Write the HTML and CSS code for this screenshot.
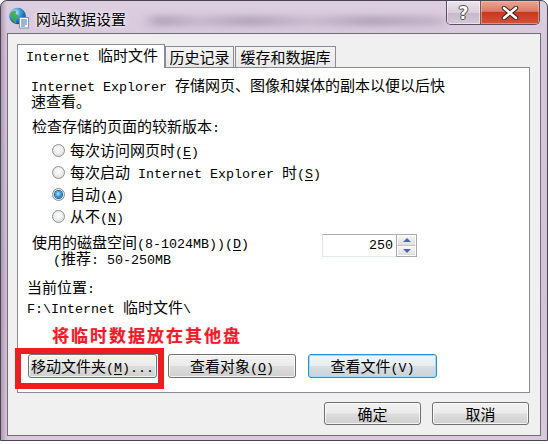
FILE: index.html
```html
<!DOCTYPE html>
<html lang="zh-CN">
<head>
  <meta charset="UTF-8" />
  <title>网站数据设置</title>
  <link rel="stylesheet" href="styles.css">
</head>
<body>
  <div class="window">
    <div class="titlebar">
      <svg class="app-icon" width="22" height="22" viewBox="0 0 22 22">
        <defs>
          <radialGradient id="globe" cx="35%" cy="30%" r="75%">
            <stop offset="0" stop-color="#d4f4ff"/>
            <stop offset="0.45" stop-color="#3a9ce0"/>
            <stop offset="1" stop-color="#0b3f86"/>
          </radialGradient>
        </defs>
        <circle cx="9.5" cy="9" r="8.3" fill="url(#globe)"/>
        <path d="M2.5 6.5c1.5-2 3.5-3 5.5-2.5 1 1-1 2.2 0 3.2s2.6 0.2 2.4 1.8-2.2 1.4-2.4 3.2 1 2.8 0 4.3c-2-0.6-3.4-2.4-3.2-4.4s-1.2-2.4-2.1-3.5z" fill="#47a83a" opacity="0.9"/>
        <path d="M12 3c1.6 0.4 3 1.6 3.6 3-1.2 0.3-2.2-0.4-2.8-1.2z" fill="#47a83a" opacity="0.8"/>
        <rect x="11.5" y="10.5" width="9" height="10.5" fill="#fbfdff" stroke="#7d93b2"/>
        <path d="M13 13h6M13 15h6M13 17h6M13 19h4" stroke="#3a6cc0" stroke-width="1"/>
      </svg>
      <span class="title">网站数据设置</span>
      <div class="behind"></div>
      <div class="caption">
        <div class="cap-btn help">?</div>
        <div class="cap-btn close">
          <svg width="20" height="14" viewBox="0 0 20 14">
            <path d="M4 2l12 10M16 2L4 12" stroke="#3a2020" stroke-width="4.6" stroke-linecap="round"/>
            <path d="M4 2l12 10M16 2L4 12" stroke="#ffffff" stroke-width="2.6" stroke-linecap="round"/>
          </svg>
        </div>
      </div>
    </div>

    <div class="client">
      <div class="tabs">
        <div class="tab active"><span class="en">Internet </span>临时文件</div>
        <div class="tab t2">历史记录</div>
        <div class="tab t3">缓存和数据库</div>
      </div>

      <div class="panel">
        <p class="desc"><span class="en">Internet Explorer </span>存储网页、图像和媒体的副本以便以后快<br>速查看。</p>

        <div class="group-label">检查存储的页面的较新版本<span class="en">:</span></div>
        <div class="radios">
          <div class="radio"><span class="dot"></span><span class="label">每次访问网页时<span class="en">(<u>E</u>)</span></span></div>
          <div class="radio"><span class="dot"></span><span class="label">每次启动<span class="en"> Internet Explorer </span>时<span class="en">(<u>S</u>)</span></span></div>
          <div class="radio"><span class="dot checked"></span><span class="label">自动<span class="en">(<u>A</u>)</span></span></div>
          <div class="radio"><span class="dot"></span><span class="label">从不<span class="en">(<u>N</u>)</span></span></div>
        </div>

        <div class="disk-row">
          <div class="disk-label">
            使用的磁盘空间<span class="en">(8-1024MB))(<u>D</u>)</span><br>
            <span class="hint"><span class="en">(</span>推荐<span class="en">: 50-250MB</span></span>
          </div>
          <div class="spinner">
            <span class="spin-value en">250</span>
            <div class="spin-arrows">
              <span class="arrow up"></span>
              <span class="arrow down"></span>
            </div>
          </div>
        </div>

        <div class="loc-label">当前位置<span class="en">:</span></div>
        <div class="loc-path"><span class="en">F:\Internet </span>临时文件<span class="en">\</span></div>

        <div class="note">将临时数据放在其他盘</div>

        <div class="actions">
          <button class="btn move">移动文件夹<span class="en">(<u>M</u>)...</span></button>
          <button class="btn objects">查看对象<span class="en">(<u>O</u>)</span></button>
          <button class="btn files focus">查看文件<span class="en">(V)</span></button>
        </div>

        <div class="mark-box"></div>
      </div>

      <div class="footer">
        <button class="btn ok">确定</button>
        <button class="btn cancel">取消</button>
      </div>
    </div>
  </div>
</body>
</html>
```

FILE: styles.css
```css
body {
  margin: 0;
  background: #ffffff;
  font-family: "Noto Sans CJK SC", sans-serif;
  font-size: 15px;
  color: #000;
}

/* latin runs are narrower, like the old bitmap font */
.en {
  font-family: "Liberation Mono", "Noto Sans CJK SC", monospace;
  font-size: 13.33px;
  line-height: 0;
}

u {
  text-underline-offset: 2px;
}

/* window frame */
.window {
  width: 548px;
  height: 441px;
  box-sizing: border-box;
  border: 1px solid #4a4450;
  border-radius: 7px 7px 0 0;
  padding: 0 6px 4px 6px;
  background:
    linear-gradient(to right, rgba(120, 100, 130, 0.45) 0, rgba(120, 100, 130, 0) 6px),
    linear-gradient(to bottom, #dccfe0 0, #d8c8dc 40px, #d4c2d8 300px, #dac8dc 441px);
  overflow: hidden;
}

.titlebar {
  height: 32px;
  display: flex;
  align-items: flex-start;
  margin: 0 -6px;
  padding-left: 7px;
}

.app-icon {
  margin-top: 6px;
  flex-shrink: 0;
}

.title {
  flex-shrink: 0;
  white-space: nowrap;
  margin-left: 6px;
  margin-top: 6px;
  line-height: 24px;
  font-size: 15px;
  text-shadow: 0 0 6px rgba(255, 255, 255, 0.9), 0 0 2px rgba(255, 255, 255, 0.9);
}

/* blurred window behind the glass */
.behind {
  flex-shrink: 1;
  margin-left: 14px;
  margin-top: 15px;
  width: 320px;
  height: 10px;
  background:
    linear-gradient(to right,
      rgba(90, 70, 100, 0) 0, rgba(90, 70, 100, 0.3) 20px, rgba(90, 70, 100, 0.15) 60px,
      rgba(90, 70, 100, 0.3) 110px, rgba(90, 70, 100, 0.12) 170px, rgba(90, 70, 100, 0.3) 230px,
      rgba(90, 70, 100, 0.2) 290px, rgba(90, 70, 100, 0) 320px);
  filter: blur(3px);
}

.caption {
  margin-left: auto;
  margin-right: 7px;
  display: flex;
  height: 23px;
  border: 1px solid #5a5060;
  border-top: none;
  border-radius: 0 0 5px 5px;
  overflow: hidden;
  flex-shrink: 0;
}

.cap-btn {
  height: 23px;
  display: flex;
  align-items: center;
  justify-content: center;
}

.help {
  width: 33px;
  border-right: 1px solid #6a5a60;
  background: linear-gradient(#ece4ee 0, #d9cedc 50%, #c6b8ca 51%, #d4c8d8 100%);
  box-shadow: inset 0 0 0 1px rgba(255, 255, 255, 0.5);
  font-family: "DejaVu Sans", sans-serif;
  font-weight: bold;
  font-size: 17px;
  color: #ffffff;
  text-shadow: 0 0 1px #333, 1px 0 0 #555, -1px 0 0 #555, 0 1px 0 #555, 0 -1px 0 #555;
}

.close {
  width: 58px;
  background: linear-gradient(#eaa595 0, #dd7a68 45%, #c9381f 50%, #d4523a 100%);
  box-shadow: inset 0 0 0 1px rgba(255, 200, 190, 0.5);
}

/* client area */
.client {
  height: 403px;
  box-sizing: border-box;
  border: 1px solid #6f6f73;
  background: #f0f0f0;
  display: flex;
  flex-direction: column;
}

.tabs {
  display: flex;
  align-items: flex-end;
  padding: 10px 0 0 9px;
}

.tab {
  height: 21px;
  box-sizing: border-box;
  border: 1px solid #898c95;
  border-bottom: none;
  background: linear-gradient(#f4f4f4, #e8e8e8);
  line-height: 20px;
  text-align: center;
  white-space: nowrap;
}

.tab.active {
  width: 148px;
  height: 24px;
  margin-bottom: -1px;
  background: #ffffff;
  text-align: left;
  padding-left: 8px;
  position: relative;
  z-index: 1;
}

.tab.t2 {
  width: 69px;
}

.tab.t3 {
  width: 101px;
  margin-left: 1px;
}

.panel {
  position: relative;
  margin-left: 9px;
  width: 513px;
  height: 326px;
  box-sizing: border-box;
  border: 1px solid #898c95;
  background: #ffffff;
  padding-left: 9px;
}

.desc {
  margin: 9px 0 0 0;
  padding-left: 4px;
  line-height: 16px;
}

.group-label {
  margin-top: 7px;
  padding-left: 5px;
  line-height: 20px;
}

.radios {
  margin-top: 3px;
  padding-left: 25px;
}

.radio {
  display: flex;
  align-items: center;
  height: 22px;
}

.radio .label {
  line-height: 22px;
  white-space: pre;
}

.dot {
  width: 13px;
  height: 13px;
  box-sizing: border-box;
  margin-right: 5px;
  border-radius: 50%;
  border: 1px solid #8d8f93;
  background: radial-gradient(circle at 50% 40%, #ffffff 0, #eeeeee 45%, #d2d4d6 100%);
  display: flex;
  align-items: center;
  justify-content: center;
  flex-shrink: 0;
}

.dot.checked::after {
  content: "";
  width: 7px;
  height: 7px;
  border-radius: 50%;
  background: radial-gradient(circle at 45% 40%, #c8f0ff 0, #38a8ea 40%, #0b4c8e 100%);
  box-shadow: 0 0 0 1px #1d5c95;
}

.disk-row {
  display: grid;
  grid-template-columns: 290px 95px;
  margin-top: 7px;
  padding-left: 5px;
}

.disk-label {
  line-height: 16px;
}

.hint {
  padding-left: 21px;
  white-space: pre;
}

.spinner {
  display: flex;
  height: 23px;
  box-sizing: border-box;
  border-top: 1px solid #abadb3;
  border-left: 1px solid #e2e3ea;
  border-bottom: 1px solid #e3e9ef;
}

.spin-value {
  flex: 1;
  text-align: right;
  padding-right: 3px;
  line-height: 22px;
}

.spin-arrows {
  width: 21px;
  margin-top: -1px;
  margin-bottom: -1px;
  border: 1px solid #a9a9a9;
  box-sizing: border-box;
  display: flex;
  flex-direction: column;
}

.arrow {
  flex: 1;
  display: flex;
  align-items: center;
  justify-content: center;
  background: linear-gradient(#f6f6f6, #dedede);
  border: 1px solid #ffffff;
}

.arrow.up {
  border-bottom: 1px solid #c4c4c4;
}

.arrow::after {
  content: "";
  border-left: 4px solid transparent;
  border-right: 4px solid transparent;
}

.arrow.up::after {
  border-bottom: 4px solid #4c68ad;
}

.arrow.down::after {
  border-top: 4px solid #4c68ad;
}

.loc-label {
  margin-top: 11px;
  line-height: 20px;
}

.loc-path {
  line-height: 20px;
}

.note {
  margin-top: 7px;
  padding-left: 25px;
  line-height: 22px;
  font-size: 17px;
  font-weight: bold;
  letter-spacing: 2px;
  color: #ef1d2a;
  text-shadow: 0 0 1px rgba(255, 110, 140, 0.7);
}

.actions {
  display: flex;
  margin-top: 8px;
  padding-left: 1px;
}

.btn {
  height: 24px;
  box-sizing: border-box;
  padding: 0;
  border: 1px solid #707070;
  border-radius: 3px;
  background: linear-gradient(#f2f2f2 0, #ebebeb 48%, #dddddd 52%, #cfcfcf 100%);
  box-shadow: inset 0 0 0 1px rgba(255, 255, 255, 0.75);
  font-family: "Noto Sans CJK SC", sans-serif;
  font-size: 15px;
  line-height: 20px;
  color: #000;
  white-space: pre;
}

.btn.move {
  width: 129px;
}

.btn.objects {
  width: 128px;
  margin-left: 11px;
}

.btn.files {
  width: 129px;
  margin-left: 12px;
}

.btn.focus {
  border-color: #2c8fd4;
  box-shadow: inset 0 0 0 1px #9fdcf8;
  background: linear-gradient(#f0f4f6 0, #e8eef1 48%, #d8dee2 52%, #cbd3d8 100%);
}

.mark-box {
  position: absolute;
  left: -3px;
  top: 280px;
  width: 149px;
  height: 41px;
  box-sizing: border-box;
  border: 6px solid #ee1c25;
  pointer-events: none;
}

.footer {
  display: flex;
  justify-content: flex-end;
  gap: 11px;
  margin-top: 9px;
  padding-right: 11px;
}

.footer .btn {
  width: 97px;
  height: 23px;
}
```
